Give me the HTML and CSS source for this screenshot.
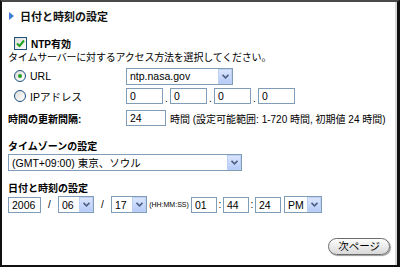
FILE: index.html
```html
<!DOCTYPE html>
<html lang="ja">
<head>
  <meta charset="UTF-8">
  <title>日付と時刻の設定</title>
  <link rel="stylesheet" href="styles.css">
</head>
<body>
  <div class="frame">
    <div class="title">
      <span class="marker"></span>
      <span>日付と時刻の設定</span>
    </div>

    <div class="ntp-row">
      <span class="checkbox">
        <svg width="9" height="9" viewBox="0 0 9 9"><path d="M1 4.5 L3.5 7 L8 1.5" fill="none" stroke="#21a121" stroke-width="2"/></svg>
      </span>
      <span class="bold">NTP有効</span>
    </div>

    <div class="note">タイムサーバーに対するアクセス方法を選択してください。</div>

    <div class="row row-url">
      <div class="label">
        <span class="radio on"></span>
        <span class="latin">URL</span>
      </div>
      <div class="select w-url">
        <span class="value">ntp.nasa.gov</span>
        <span class="arrow"><svg width="7" height="5" viewBox="0 0 7 5"><path d="M0.5 0.8 L3.5 3.8 L6.5 0.8" fill="none" stroke="#4d6185" stroke-width="1.6"/></svg></span>
      </div>
    </div>

    <div class="row">
      <div class="label">
        <span class="radio"></span>
        <span class="latin">IPアドレス</span>
      </div>
      <div class="field w-ip">0</div>
      <span class="sep">.</span>
      <div class="field w-ip">0</div>
      <span class="sep">.</span>
      <div class="field w-ip">0</div>
      <span class="sep">.</span>
      <div class="field w-ip">0</div>
    </div>

    <div class="row row-interval">
      <div class="label bold plain">時間の更新間隔:</div>
      <div class="field w-hours">24</div>
      <span class="hint">時間 (設定可能範囲: 1-720 時間, 初期値 24 時間)</span>
    </div>

    <div class="section bold">タイムゾーンの設定</div>
    <div class="select w-zone">
      <span class="value">(GMT+09:00) 東京、ソウル</span>
      <span class="arrow"><svg width="7" height="5" viewBox="0 0 7 5"><path d="M0.5 0.8 L3.5 3.8 L6.5 0.8" fill="none" stroke="#4d6185" stroke-width="1.6"/></svg></span>
    </div>

    <div class="section section-date bold">日付と時刻の設定</div>
    <div class="date-row">
      <div class="field w-year">2006</div>
      <span class="slash">/</span>
      <div class="select w-small">
        <span class="value">06</span>
        <span class="arrow"><svg width="7" height="5" viewBox="0 0 7 5"><path d="M0.5 0.8 L3.5 3.8 L6.5 0.8" fill="none" stroke="#4d6185" stroke-width="1.6"/></svg></span>
      </div>
      <span class="slash">/</span>
      <div class="select w-small">
        <span class="value">17</span>
        <span class="arrow"><svg width="7" height="5" viewBox="0 0 7 5"><path d="M0.5 0.8 L3.5 3.8 L6.5 0.8" fill="none" stroke="#4d6185" stroke-width="1.6"/></svg></span>
      </div>
      <span class="format">(HH:MM:SS)</span>
      <div class="field w-time">01</div>
      <span class="colon">:</span>
      <div class="field w-time">44</div>
      <span class="colon">:</span>
      <div class="field w-time">24</div>
      <div class="select w-ampm">
        <span class="value">PM</span>
        <span class="arrow"><svg width="7" height="5" viewBox="0 0 7 5"><path d="M0.5 0.8 L3.5 3.8 L6.5 0.8" fill="none" stroke="#4d6185" stroke-width="1.6"/></svg></span>
      </div>
    </div>

    <div class="footer">
      <span class="next-button">次ページ</span>
    </div>
  </div>
</body>
</html>
```

FILE: styles.css
```css
body {
  margin: 0;
  background-color: #fff;
  font-family: "Liberation Sans", "Noto Sans CJK JP", sans-serif;
  font-size: 10px;
  color: #000;
}

.frame {
  width: 400px;
  height: 267px;
  box-sizing: border-box;
  border-top: 2px solid #4a4a4a;
  border-left: 2px solid #111;
  border-right: 3px solid #111;
  border-bottom: 2px solid #111;
  box-shadow: inset -2px 0 0 #d8d8d8;
  padding: 0 0 0 6px;
  display: flex;
  flex-direction: column;
}

.bold {
  font-weight: bold;
}

/* Title */
.title {
  height: 28px;
  display: flex;
  align-items: center;
  gap: 6px;
  padding-left: 1px;
  font-size: 11px;
  font-weight: bold;
  color: #111;
}

.marker {
  width: 0;
  height: 0;
  border-top: 4px solid transparent;
  border-bottom: 4px solid transparent;
  border-left: 5px solid #3d7fd6;
}

/* NTP checkbox */
.ntp-row {
  height: 16px;
  margin-top: 5px;
  display: flex;
  align-items: center;
  gap: 4px;
  padding-left: 6px;
}

.checkbox {
  width: 11px;
  height: 11px;
  border: 1px solid #1c5180;
  background: linear-gradient(135deg, #dcdcd7, #fff);
  display: flex;
  align-items: center;
  justify-content: center;
}

.note {
  height: 14px;
  line-height: 14px;
  letter-spacing: -0.2px;
}

/* Form rows */
.row {
  height: 20px;
  display: flex;
  align-items: center;
}

.row-url {
  margin-top: 1px;
}

.row-interval {
  margin-top: 2px;
}

.label {
  width: 118px;
  display: flex;
  align-items: center;
  gap: 4px;
  padding-left: 6px;
  box-sizing: border-box;
}

.label.plain {
  padding-left: 0;
}

.latin {
  font-size: 10.5px;
}

.radio {
  width: 10px;
  height: 10px;
  border: 1px solid #1c5180;
  border-radius: 50%;
  background: linear-gradient(135deg, #dcdcd7, #fff);
  display: flex;
  align-items: center;
  justify-content: center;
}

.radio.on::after {
  content: "";
  width: 4px;
  height: 4px;
  border-radius: 50%;
  background-color: #21a121;
}

.field {
  height: 16px;
  box-sizing: border-box;
  border: 1px solid #7f9db9;
  padding: 0 3px;
  line-height: 14px;
  font-size: 10.5px;
}

.w-ip { width: 37px; }
.w-hours { width: 40px; }
.w-year { width: 33px; }
.w-time { width: 26px; }

.sep {
  width: 7px;
  text-align: center;
  padding-top: 4px;
}

.hint {
  margin-left: 4px;
}

.select {
  height: 17px;
  box-sizing: border-box;
  border: 1px solid #7f9db9;
  display: flex;
  align-items: center;
  justify-content: space-between;
  padding-left: 3px;
  font-size: 10.5px;
}

.arrow {
  width: 14px;
  height: 15px;
  box-sizing: border-box;
  border: 1px solid #bfd0f5;
  background: linear-gradient(#dbe6fd, #b6cbf9);
  display: flex;
  align-items: center;
  justify-content: center;
}

.w-url { width: 107px; }
.w-zone { width: 234px; }
.w-small { width: 36px; }
.w-ampm { width: 38px; margin-left: 3px; }

/* Sections */
.section {
  height: 14px;
  line-height: 14px;
  margin-top: 12px;
}

.section-date {
  margin-top: 11px;
}

.date-row {
  height: 17px;
  display: flex;
  align-items: center;
}

.slash {
  width: 17px;
  text-align: center;
}

.format {
  font-size: 7px;
  width: 44px;
  text-align: center;
}

.colon {
  width: 6px;
  text-align: center;
}

/* Next button */
.footer {
  margin-top: auto;
  height: 27px;
  display: flex;
  justify-content: flex-end;
  padding-right: 7px;
}

.next-button {
  height: 15px;
  padding: 0 9px;
  border: 1px solid #6b6b6b;
  border-radius: 9px;
  background: linear-gradient(#fdfdfd, #d9d9d9);
  box-shadow: 1px 1px 1px #999;
  font-size: 10.5px;
  line-height: 15px;
}
```
